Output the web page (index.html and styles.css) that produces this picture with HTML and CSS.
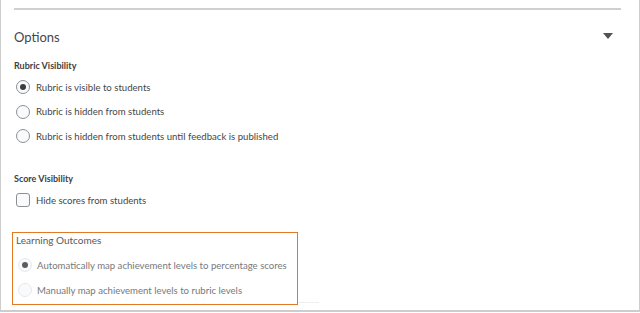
FILE: index.html
```html
<!DOCTYPE html>
<html lang="en">
<head>
  <meta charset="UTF-8">
  <title>Rubric Options</title>
  <link rel="stylesheet" href="styles.css">
</head>
<body>
  <div class="panel">
    <div class="top-rule"></div>

    <!-- Options header -->
    <div class="options-head">
      <h2>Options</h2>
      <span class="caret"></span>
    </div>

    <!-- Rubric visibility -->
    <section class="group">
      <h3 class="group-label">Rubric Visibility</h3>
      <label class="choice"><span class="radio checked"></span>Rubric is visible to students</label>
      <label class="choice"><span class="radio"></span>Rubric is hidden from students</label>
      <label class="choice"><span class="radio"></span>Rubric is hidden from students until feedback is published</label>
    </section>

    <!-- Score visibility -->
    <section class="group score">
      <h3 class="group-label">Score Visibility</h3>
      <label class="choice"><span class="checkbox"></span>Hide scores from students</label>
    </section>

    <!-- Learning outcomes (highlighted) -->
    <section class="outcomes">
      <h3 class="outcomes-label">Learning Outcomes</h3>
      <div class="faded">
        <label class="choice"><span class="radio checked"></span>Automatically map achievement levels to percentage scores</label>
        <label class="choice"><span class="radio"></span>Manually map achievement levels to rubric levels</label>
      </div>
    </section>
    <div class="bottom-line"></div>
  </div>
</body>
</html>
```

FILE: styles.css
```css
/* Reset */
* {
  margin: 0;
  padding: 0;
  box-sizing: border-box;
}

body {
  font-family: Lato, 'Open Sans', sans-serif;
  color: #494c4e;
  background-color: #ffffff;
}

/* Outer panel */
.panel {
  width: 640px;
  height: 312px;
  border-left: 1px solid #cdcdcd;
  border-right: 1px solid #cdcdcd;
  border-bottom: 2px solid #cdcdcd;
  padding: 8px 18px 0 13px;
  position: relative;
}

.top-rule {
  height: 2px;
  background-color: #d0d0d0;
}

/* Options header */
.options-head {
  display: flex;
  justify-content: space-between;
  align-items: center;
  margin-top: 17px;
  padding-right: 8px;
}

.options-head h2 {
  font-size: 13px;
  font-weight: 400;
  line-height: 20px;
  color: #44474a;
}

.caret {
  width: 0;
  height: 0;
  margin-top: -3px;
  border-left: 5px solid transparent;
  border-right: 5px solid transparent;
  border-top: 6px solid #4f5356;
}

/* Groups */
.group {
  margin-top: 13px;
}

.group-label {
  font-size: 9px;
  font-weight: 700;
  line-height: 12px;
  color: #3d4042;
  margin-bottom: 8px;
}

.score {
  margin-top: 30px;
}

.choice {
  display: flex;
  align-items: center;
  gap: 6px;
  height: 14px;
  margin-bottom: 10.5px;
  padding-left: 2px;
  font-size: 9.6px;
  white-space: nowrap;
  color: #44474a;
}

.radio {
  flex: none;
  width: 14px;
  height: 14px;
  border: 1px solid #8c9093;
  border-radius: 50%;
  background-color: #f9fafb;
  position: relative;
}

.radio.checked::after {
  content: "";
  position: absolute;
  top: 3px;
  left: 3px;
  width: 6px;
  height: 6px;
  border-radius: 50%;
  background-color: #3a3d3f;
}

.checkbox {
  flex: none;
  width: 14px;
  height: 14px;
  border: 1px solid #8c9093;
  border-radius: 3px;
  background-color: #f9fafb;
}

/* Learning outcomes */
.outcomes {
  margin-top: 25px;
  margin-left: -2px;
  width: 286px;
  height: 73px;
  border: 1px solid #e07a26;
  padding: 1px 0 0 3px;
}

.outcomes-label {
  font-size: 10px;
  font-weight: 400;
  line-height: 12px;
  color: #565a5c;
  margin-bottom: 12px;
}

.faded .choice {
  margin-bottom: 11px;
  gap: 5px;
  color: #76797b;
}

.faded .radio {
  border-color: #e6e9ee;
}

.faded .radio.checked::after {
  background-color: #5a5d5f;
}

.bottom-line {
  position: absolute;
  left: 297px;
  top: 302px;
  width: 21px;
  height: 1px;
  background-color: #eeeeee;
}
```
